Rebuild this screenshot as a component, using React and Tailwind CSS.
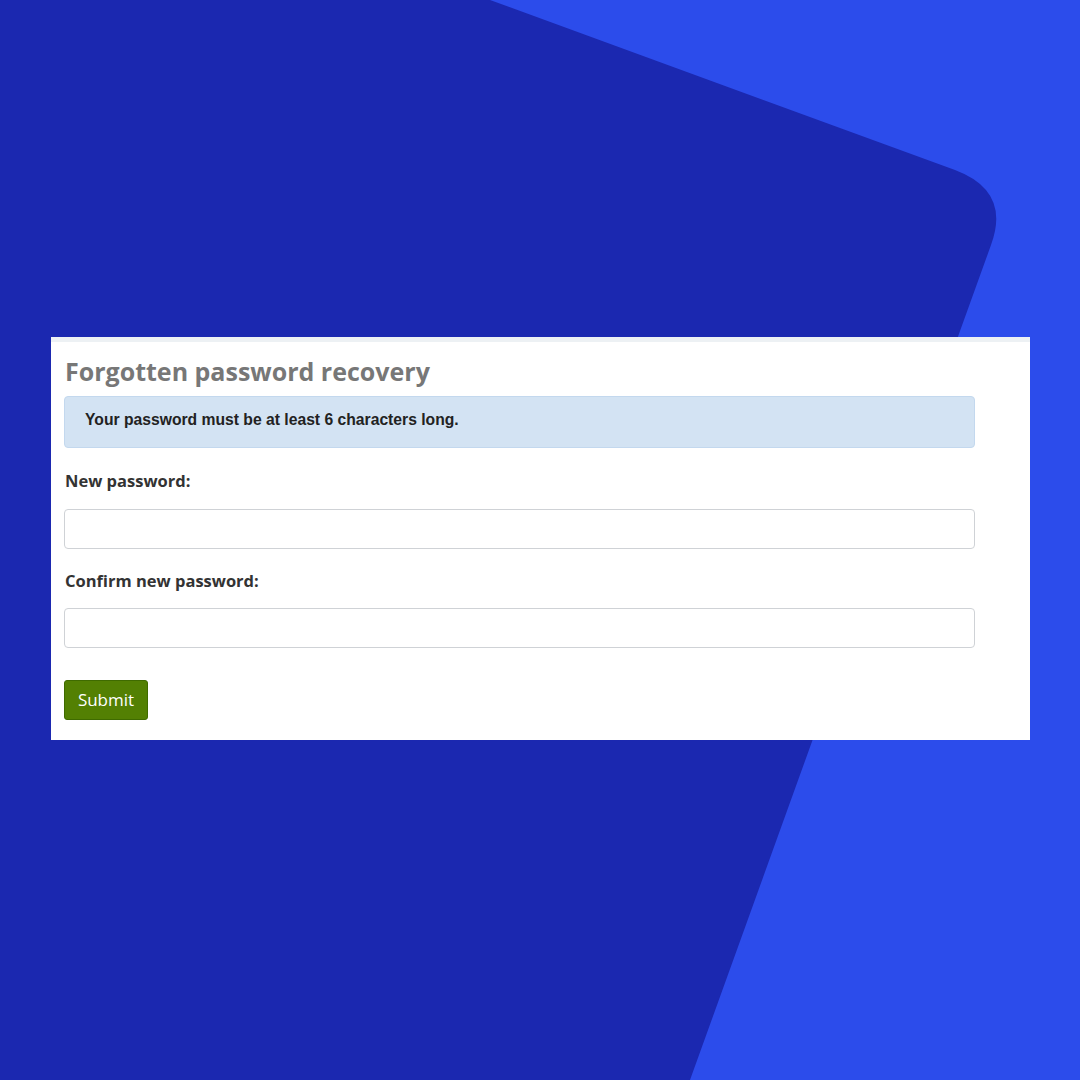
export default function App() {
  return (
    <div className="relative w-[1080px] h-[1080px] overflow-hidden bg-[#2c4ceb]">
      <svg className="absolute inset-0" width="1080" height="1080" viewBox="0 0 1080 1080">
        <path d="M0 0 L490 0 L955 170 Q1011 191 991 245 L690 1080 L0 1080 Z" fill="#1b28b0" />
      </svg>
      <div className="relative pt-[337px] pl-[51px]">
        <div className="w-[979px] bg-white border-t-[5px] border-[#edf1f4] pl-[13px] pr-[55px] pt-[11px] pb-[20px] font-['Open_Sans',sans-serif]">
          <h1 className="text-[25px] leading-[36px] font-bold text-[#777777] pl-px">Forgotten password recovery</h1>
          <div className="mt-[7px] h-[52px] flex items-center pl-[20px] pb-[4px] bg-[#d3e3f3] border border-[#c3d8ee] rounded-[4px]">
            <p className="text-[15.7px] font-bold text-[#222222] font-['Liberation_Sans',sans-serif]">Your password must be at least 6 characters long.</p>
          </div>
          <label className="block mt-[21px] text-[16.5px] leading-[24px] font-bold text-[#333333] pl-px">New password:</label>
          <input type="password" className="block mt-[16px] w-full h-[40px] border border-[#cfd2d6] rounded-[4px] bg-white" />
          <label className="block mt-[20px] text-[16.5px] leading-[24px] font-bold text-[#333333] pl-px">Confirm new password:</label>
          <input type="password" className="block mt-[15px] w-full h-[40px] border border-[#cfd2d6] rounded-[4px] bg-white" />
          <button className="mt-[32px] w-[84px] h-[40px] bg-[#538003] border border-[#3f6b00] rounded-[3px] text-white text-[17px]">Submit</button>
        </div>
      </div>
    </div>
  )
}
